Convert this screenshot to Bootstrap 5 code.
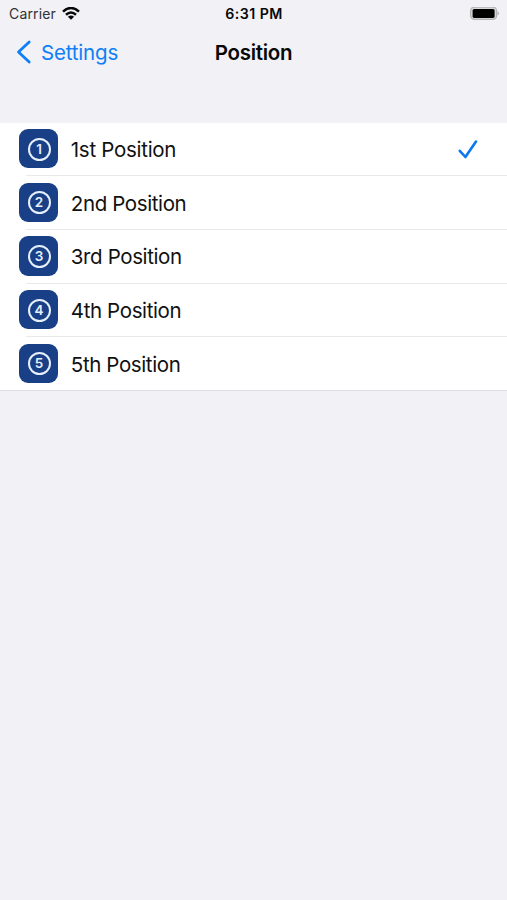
<!DOCTYPE html>
<html lang="en">
<head>
<meta charset="utf-8">
<meta name="viewport" content="width=device-width, initial-scale=1">
<title>Position</title>
<link href="https://cdn.jsdelivr.net/npm/bootstrap@5.3.0/dist/css/bootstrap.min.css" rel="stylesheet">
<style>
body{background:#f1f1f6;color:#080808;font-family:Inter,"Liberation Sans",sans-serif;min-height:100vh;overflow:hidden}
svg{display:block;flex:none}
.status-bar{height:28px;padding:0 8px 0 9px;font-size:14px;line-height:28px}
.carrier{color:#303034;letter-spacing:.16px}
.wifi{margin-left:6px}
.clock{font-weight:600;font-size:14.2px;letter-spacing:.45px}
.title-bar{height:48px;font-size:20.5px;padding:0 16px}
.back-link{color:#0f7ff5;letter-spacing:-.18px}
.back-label{padding-top:2px;line-height:46px}
.page-title{padding-top:2px;line-height:46px;font-weight:600;letter-spacing:-.3px}
.positions{margin-top:47px;background:#fff;border-bottom:1px solid #dedee2}
.position-row{height:53.7px;padding:0 29px 0 19px;color:#111;font-size:20.5px;letter-spacing:-.38px;line-height:1.5}
.position-row:first-child{height:52.4px;padding-bottom:1px;letter-spacing:-.28px}
.position-row+.position-row{background:linear-gradient(#e9e9ec,#e9e9ec) 26px 0/100% 1px no-repeat #fff}
.position-row:last-child{height:53.5px}
.row-label{padding-top:3.4px}
.tile{width:39.3px;height:39.3px;border-radius:9px;background:#193f86;margin-right:12.5px;padding:.8px 0 0 .8px}
.ring{width:23px;height:23px;border:2px solid #e6effc;border-radius:50%;color:#e6effc;font-size:13.5px;font-weight:600;line-height:1;letter-spacing:0;padding-top:1px}
</style>
<script src="https://cdn.jsdelivr.net/npm/bootstrap@5.3.0/dist/js/bootstrap.bundle.min.js"></script>
</head>
<body>
<header>
  <div class="status-bar row g-0">
    <div class="col d-flex align-items-center"><span class="carrier">Carrier</span>
      <svg class="wifi" width="18" height="14" viewBox="0 0 18 14" fill="none" stroke="#080808" stroke-width="2.5"><path d="M1 4.7Q9-2.7 17 4.7M4 7.7Q9 3.2 14 7.7"/><path d="M9 12.8 5.9 9.7Q9 7.2 12.1 9.7Z" fill="#080808" stroke="none"/></svg>
    </div>
    <div class="col-auto clock">6:31 PM</div>
    <div class="col d-flex align-items-center justify-content-end">
      <svg width="30" height="14" viewBox="0 0 30 14"><rect x="1.6" y=".2" width="26" height="12.2" rx="3.8" fill="#d8d8db" stroke="#b4b4b7" stroke-width="1.3"/><rect x="3.6" y="1.9" width="22" height="9" rx="1.6" fill="#000"/><path d="M28.6 4q2.6 2.3 0 4.6z" fill="#aaaaad"/></svg>
    </div>
  </div>
  <nav class="title-bar row g-0">
    <div class="col d-flex align-items-center back-link">
      <svg class="me-2" width="17" height="24" viewBox="0 0 17 24" fill="none" stroke="#0f7ff5" stroke-width="2.8" stroke-linecap="round" stroke-linejoin="round"><path d="M13.2 2 2.5 12l10.7 10"/></svg><span class="back-label">Settings</span>
    </div>
    <div class="col-auto page-title">Position</div>
    <div class="col"></div>
  </nav>
</header>
<main class="positions">
  <div class="position-row d-flex align-items-center"><span class="tile d-flex align-items-center justify-content-center"><span class="ring d-flex align-items-center justify-content-center">1</span></span><span class="row-label">1st Position</span>
    <svg class="ms-auto" width="20" height="20" viewBox="0 0 20 20" fill="none" stroke="#0b78ef" stroke-width="2.6" stroke-linecap="round" stroke-linejoin="round"><path d="m1.8 11.8 5.6 6.2L18 2.6"/></svg></div>
  <div class="position-row d-flex align-items-center"><span class="tile d-flex align-items-center justify-content-center"><span class="ring d-flex align-items-center justify-content-center">2</span></span><span class="row-label">2nd Position</span></div>
  <div class="position-row d-flex align-items-center"><span class="tile d-flex align-items-center justify-content-center"><span class="ring d-flex align-items-center justify-content-center">3</span></span><span class="row-label">3rd Position</span></div>
  <div class="position-row d-flex align-items-center"><span class="tile d-flex align-items-center justify-content-center"><span class="ring d-flex align-items-center justify-content-center">4</span></span><span class="row-label">4th Position</span></div>
  <div class="position-row d-flex align-items-center"><span class="tile d-flex align-items-center justify-content-center"><span class="ring d-flex align-items-center justify-content-center">5</span></span><span class="row-label">5th Position</span></div>
</main>
</body>
</html>
